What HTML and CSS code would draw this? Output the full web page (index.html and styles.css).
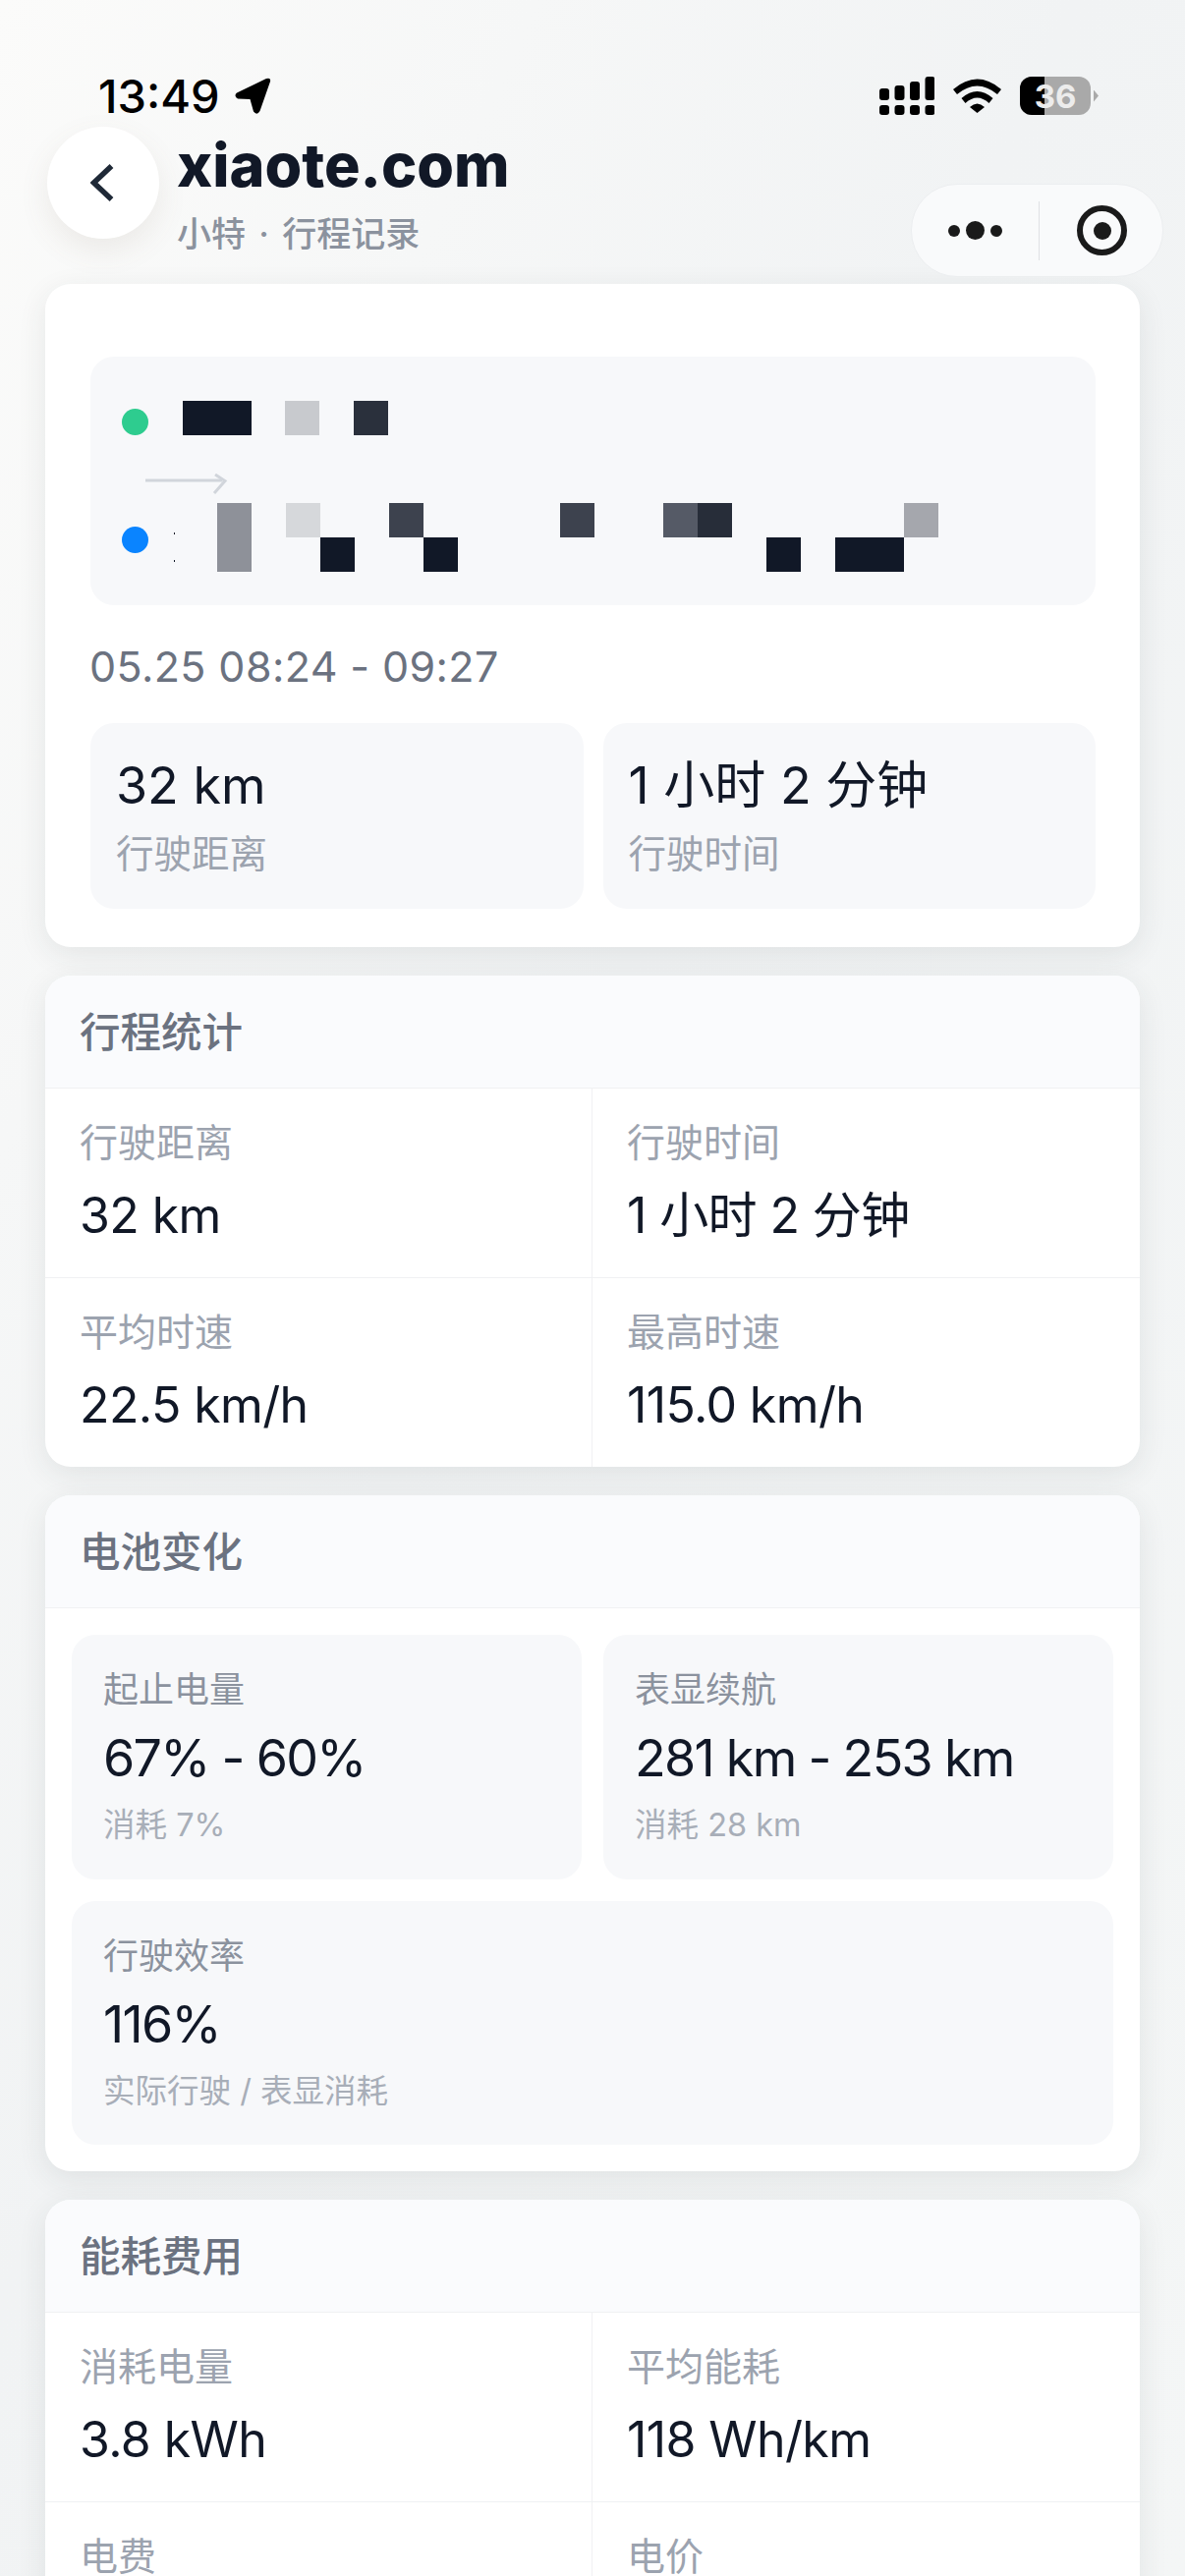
FILE: index.html
```html
<!DOCTYPE html>
<html lang="zh-CN">
<head>
  <meta charset="UTF-8" />
  <title>xiaote.com</title>
  <link rel="stylesheet" href="styles.css">
</head>
<body>

  <!-- 状态栏 -->
  <div class="status-bar">
    <div class="status-time">
      <span>13:49</span>
      <svg class="loc-icon" width="37" height="37" viewBox="0 0 37 37">
        <path d="M2 15.500 L32 1 Q37 -0.500 36 4 L25.500 34 Q22.500 39 19 34.500 L15.500 22 L3 21.500 Q-1.500 18.500 2 15.500 Z" fill="#000"/>
      </svg>
    </div>
    <div class="status-icons">
      <svg class="signal-icon" width="56" height="39" viewBox="0 0 56 39">
        <rect x="0" y="12" width="10" height="12" rx="3"/>
        <rect x="15.500" y="9" width="10" height="15" rx="3"/>
        <rect x="31" y="5" width="10" height="19" rx="3"/>
        <rect x="46.500" y="0" width="10" height="24" rx="3"/>
        <rect x="0" y="29" width="10" height="10" rx="3"/>
        <rect x="15.500" y="29" width="10" height="10" rx="3"/>
        <rect x="31" y="29" width="10" height="10" rx="3"/>
        <rect x="46.500" y="29" width="10" height="10" rx="3"/>
      </svg>
      <svg class="wifi-icon" width="49" height="35" viewBox="0 0 49 35">
        <path d="M0 11 Q24.500 -10 49 11 L45 16 Q24.500 -1 4 16 Z"/>
        <path d="M8.500 20 Q24.500 6 40.500 20 L36.500 25 Q24.500 14 12.500 25 Z"/>
        <path d="M17 29 Q24.500 22 32 29 L24.500 35 Z"/>
      </svg>
      <div class="battery">
        <div class="battery-body">
          <div class="battery-fill"></div>
          <span class="battery-num">36</span>
        </div>
        <div class="battery-nub"></div>
      </div>
    </div>
  </div>

  <!-- 顶部导航 -->
  <div class="nav">
    <div class="back-btn">
      <svg width="24" height="38" viewBox="0 0 24 38" fill="none">
        <path d="M21.500 2 L3.500 19 L21.500 36" stroke="#1f2937" stroke-width="5.500"/>
      </svg>
    </div>
    <div class="nav-text">
      <div class="nav-title">xiaote.com</div>
      <div class="nav-sub">小特 · 行程记录</div>
    </div>
  </div>
  <div class="capsule">
    <div class="capsule-dots">
      <i class="dot-s"></i><i class="dot-l"></i><i class="dot-s"></i>
    </div>
    <div class="capsule-line"></div>
    <div class="capsule-target"><i></i></div>
  </div>

  <div class="content">

    <!-- 路线 -->
    <div class="card route-card">
      <div class="route-box">
        <div class="route-row route-start">
          <span class="route-dot green"></span>
          <svg class="mosaic" width="210" height="35" viewBox="0 0 210 35" shape-rendering="crispEdges">
            <rect x="0" y="0" width="70" height="35" fill="#111827"/>
            <rect x="104" y="0" width="35" height="35" fill="#c8cace"/>
            <rect x="174" y="0" width="35" height="35" fill="#2a303c"/>
          </svg>
        </div>
        <svg class="route-arrow" width="84" height="22" viewBox="0 0 84 22" fill="none">
          <path d="M0 7 H78" stroke="#d1d5db" stroke-width="3"/>
          <path d="M71 1 L81 7.500 L70 20" stroke="#d1d5db" stroke-width="3"/>
        </svg>
        <div class="route-row route-end">
          <span class="route-dot blue"></span>
          <svg class="mosaic" width="770" height="70" viewBox="0 0 770 70" shape-rendering="crispEdges">
            <rect x="0" y="30" width="1" height="2" fill="#111827"/>
            <rect x="0" y="58" width="1" height="2" fill="#111827"/>
            <rect x="44" y="0" width="35" height="70" fill="#8e9199"/>
            <rect x="114" y="0" width="35" height="35" fill="#d6d8db"/>
            <rect x="149" y="35" width="35" height="35" fill="#111827"/>
            <rect x="219" y="0" width="35" height="35" fill="#3d424e"/>
            <rect x="254" y="35" width="35" height="35" fill="#111827"/>
            <rect x="393" y="0" width="35" height="35" fill="#3d424e"/>
            <rect x="498" y="0" width="35" height="35" fill="#555a66"/>
            <rect x="533" y="0" width="35" height="35" fill="#272d39"/>
            <rect x="603" y="35" width="35" height="35" fill="#111827"/>
            <rect x="673" y="35" width="70" height="35" fill="#111827"/>
            <rect x="743" y="0" width="35" height="35" fill="#a5a7ad"/>
          </svg>
        </div>
      </div>
      <div class="route-time">05.25 08:24 - 09:27</div>
      <div class="route-stats">
        <div class="route-stat">
          <div class="route-stat-value">32 km</div>
          <div class="route-stat-label">行驶距离</div>
        </div>
        <div class="route-stat">
          <div class="route-stat-value">1 小时 2 分钟</div>
          <div class="route-stat-label">行驶时间</div>
        </div>
      </div>
    </div>

    <!-- 行程统计 -->
    <div class="card">
      <div class="card-header">行程统计</div>
      <div class="info-grid">
        <div class="info-cell">
          <div class="info-label">行驶距离</div>
          <div class="info-value">32 km</div>
        </div>
        <div class="info-cell">
          <div class="info-label">行驶时间</div>
          <div class="info-value">1 小时 2 分钟</div>
        </div>
        <div class="info-cell">
          <div class="info-label">平均时速</div>
          <div class="info-value">22.5 km/h</div>
        </div>
        <div class="info-cell">
          <div class="info-label">最高时速</div>
          <div class="info-value">115.0 km/h</div>
        </div>
      </div>
    </div>

    <!-- 电池变化 -->
    <div class="card">
      <div class="card-header">电池变化</div>
      <div class="battery-grid">
        <div class="battery-item">
          <div class="battery-label">起止电量</div>
          <div class="battery-value">67% - 60%</div>
          <div class="battery-note">消耗 7%</div>
        </div>
        <div class="battery-item">
          <div class="battery-label">表显续航</div>
          <div class="battery-value">281 km - 253 km</div>
          <div class="battery-note">消耗 28 km</div>
        </div>
        <div class="battery-item wide">
          <div class="battery-label">行驶效率</div>
          <div class="battery-value">116%</div>
          <div class="battery-note">实际行驶 / 表显消耗</div>
        </div>
      </div>
    </div>

    <!-- 能耗费用 -->
    <div class="card">
      <div class="card-header">能耗费用</div>
      <div class="info-grid">
        <div class="info-cell">
          <div class="info-label">消耗电量</div>
          <div class="info-value">3.8 kWh</div>
        </div>
        <div class="info-cell">
          <div class="info-label">平均能耗</div>
          <div class="info-value">118 Wh/km</div>
        </div>
        <div class="info-cell">
          <div class="info-label">电费</div>
        </div>
        <div class="info-cell">
          <div class="info-label">电价</div>
        </div>
      </div>
    </div>

  </div>
</body>
</html>
```

FILE: styles.css
```css
* {
  box-sizing: border-box;
}

html, body {
  height: 2622px;
  overflow: hidden;
}

body {
  margin: 0;
  position: relative;
  background: linear-gradient(115deg, #fbfbfa 0%, #f1f3f4 45%, #f4f6f6 100%);
  color: #111827;
  font-family: Inter, "Noto Sans CJK SC", sans-serif;
}

/* status bar */
.status-bar {
  height: 129px;
  padding: 78px 88px 0 100px;
  display: flex;
  justify-content: space-between;
  align-items: flex-start;
}

.status-time {
  display: flex;
  align-items: center;
  gap: 15px;
  height: 39px;
  font-size: 47px;
  font-weight: 500;
  color: #000;
}

.status-icons {
  display: flex;
  align-items: center;
  gap: 19px;
  height: 39px;
}

.signal-icon, .wifi-icon {
  fill: #000;
}

.battery {
  display: flex;
  align-items: center;
  gap: 3px;
}

.battery-body {
  position: relative;
  width: 72px;
  height: 39px;
  border-radius: 12px;
  background: #a9a9a9;
  overflow: hidden;
  display: flex;
  align-items: center;
  justify-content: center;
}

.battery-fill {
  position: absolute;
  left: 0;
  top: 0;
  bottom: 0;
  width: 25px;
  background: #000;
}

.battery-num {
  position: relative;
  font-size: 33px;
  font-weight: 700;
  color: #ececec;
}

.battery-nub {
  width: 5px;
  height: 12px;
  background: #a9a9a9;
  clip-path: polygon(0 0, 100% 50%, 0 100%);
}

/* nav */
.nav {
  height: 160px;
  padding-left: 48px;
  display: flex;
  align-items: flex-start;
  gap: 18px;
}

.back-btn {
  width: 114px;
  height: 114px;
  border-radius: 50%;
  background: #fff;
  box-shadow: 0 12px 30px rgba(120, 100, 80, 0.1);
  display: flex;
  align-items: center;
  justify-content: center;
  padding-right: 3px;
}

.nav-text {
  margin-top: 5px;
}

.nav-title {
  font-size: 61px;
  font-weight: 800;
  line-height: 68px;
  color: #111827;
}

.nav-sub {
  margin-top: 13px;
  font-size: 35px;
  line-height: 46px;
  font-weight: 500;
  word-spacing: 4px;
  color: #8b929e;
}

.capsule {
  position: absolute;
  left: 927px;
  top: 187px;
  width: 257px;
  height: 95px;
  border-radius: 47px;
  background: #f9fafb;
  border: 1px solid #eceef0;
  display: flex;
  align-items: center;
}

.capsule-dots {
  width: 129px;
  display: flex;
  align-items: center;
  justify-content: center;
  gap: 6px;
}

.capsule-dots i {
  display: block;
  border-radius: 50%;
  background: #1a1a1a;
}

.dot-s {
  width: 12px;
  height: 12px;
}

.dot-l {
  width: 19px;
  height: 19px;
}

.capsule-line {
  width: 1px;
  height: 60px;
  background: #dfe1e4;
}

.capsule-target {
  margin-left: 38px;
  width: 51px;
  height: 51px;
  border: 6px solid #1a1a1a;
  border-radius: 50%;
  display: flex;
  align-items: center;
  justify-content: center;
}

.capsule-target i {
  width: 18px;
  height: 18px;
  border-radius: 50%;
  background: #1a1a1a;
}

/* cards */
.content {
  padding: 0 46px;
  display: flex;
  flex-direction: column;
  gap: 29px;
}

.card {
  background: #fff;
  border-radius: 26px;
  overflow: hidden;
  box-shadow: 0 8px 30px rgba(40, 50, 60, 0.09);
}

.card-header {
  height: 115px;
  padding: 0 35px 5px;
  display: flex;
  align-items: center;
  background: #fafbfd;
  border-bottom: 1px solid #f0f1f3;
  font-size: 41.5px;
  font-weight: 500;
  color: #6b7280;
}

/* route card */
.route-card {
  padding: 74px 45px 39px 46px;
}

.route-box {
  height: 253px;
  padding: 45px 32px 0;
  border-radius: 24px;
  background: #f7f8fa;
}

.route-row {
  display: flex;
  align-items: flex-start;
}

.route-dot {
  flex: none;
  width: 27px;
  height: 27px;
  border-radius: 50%;
}

.green {
  background: #2ecc8f;
}

.blue {
  background: #0a84ff;
}

.route-start .route-dot {
  margin-top: 8px;
}

.route-start .mosaic {
  margin-left: 35px;
}

.route-arrow {
  display: block;
  margin: 39px 0 0 24px;
}

.route-end {
  margin-top: 8px;
}

.route-end .route-dot {
  margin-top: 24px;
}

.route-end .mosaic {
  margin-left: 26px;
  overflow: visible;
}

.route-time {
  margin-top: 36px;
  margin-left: -1px;
  font-size: 43px;
  line-height: 52px;
  letter-spacing: 0.4px;
  color: #6b7280;
}

.route-stats {
  margin-top: 32px;
  display: flex;
  gap: 20px;
}

.route-stat {
  flex: 1;
  height: 189px;
  padding: 32px 26px 0;
  border-radius: 24px;
  background: #f7f8fa;
}

.route-stat-value {
  font-size: 52px;
  line-height: 64px;
  color: #111827;
}

.route-stat-label {
  margin-top: 12px;
  font-size: 38.5px;
  line-height: 50px;
  color: #9ca3af;
}

/* two column rows */
.info-grid {
  display: grid;
  grid-template-columns: 1fr 1fr;
}

.info-cell {
  height: 192.5px;
  padding: 30px 35px 0;
  border-bottom: 1px solid #f0f1f3;
}

.info-cell:nth-child(odd) {
  border-right: 1px solid #f0f1f3;
}

.info-cell:nth-last-child(-n+2) {
  border-bottom: none;
}

.info-label {
  font-size: 39px;
  line-height: 50px;
  color: #9ca3af;
}

.info-value {
  margin-top: 17px;
  font-size: 50px;
  line-height: 64px;
  letter-spacing: -0.6px;
  color: #111827;
}

/* battery boxes */
.battery-grid {
  padding: 27px;
  display: grid;
  grid-template-columns: 1fr 1fr;
  gap: 22px;
}

.battery-item {
  height: 248.5px;
  padding: 33px 32px 0;
  border-radius: 24px;
  background: #f7f8fa;
}

.battery-item.wide {
  grid-column: span 2;
}

.battery-label {
  font-size: 36px;
  line-height: 46px;
  color: #8b929e;
}

.battery-value {
  margin-top: 15px;
  font-size: 52px;
  line-height: 64px;
  letter-spacing: -1.7px;
  color: #111827;
}

.battery-note {
  margin-top: 15px;
  font-size: 32.5px;
  line-height: 42px;
  color: #a8aeb8;
}
```
